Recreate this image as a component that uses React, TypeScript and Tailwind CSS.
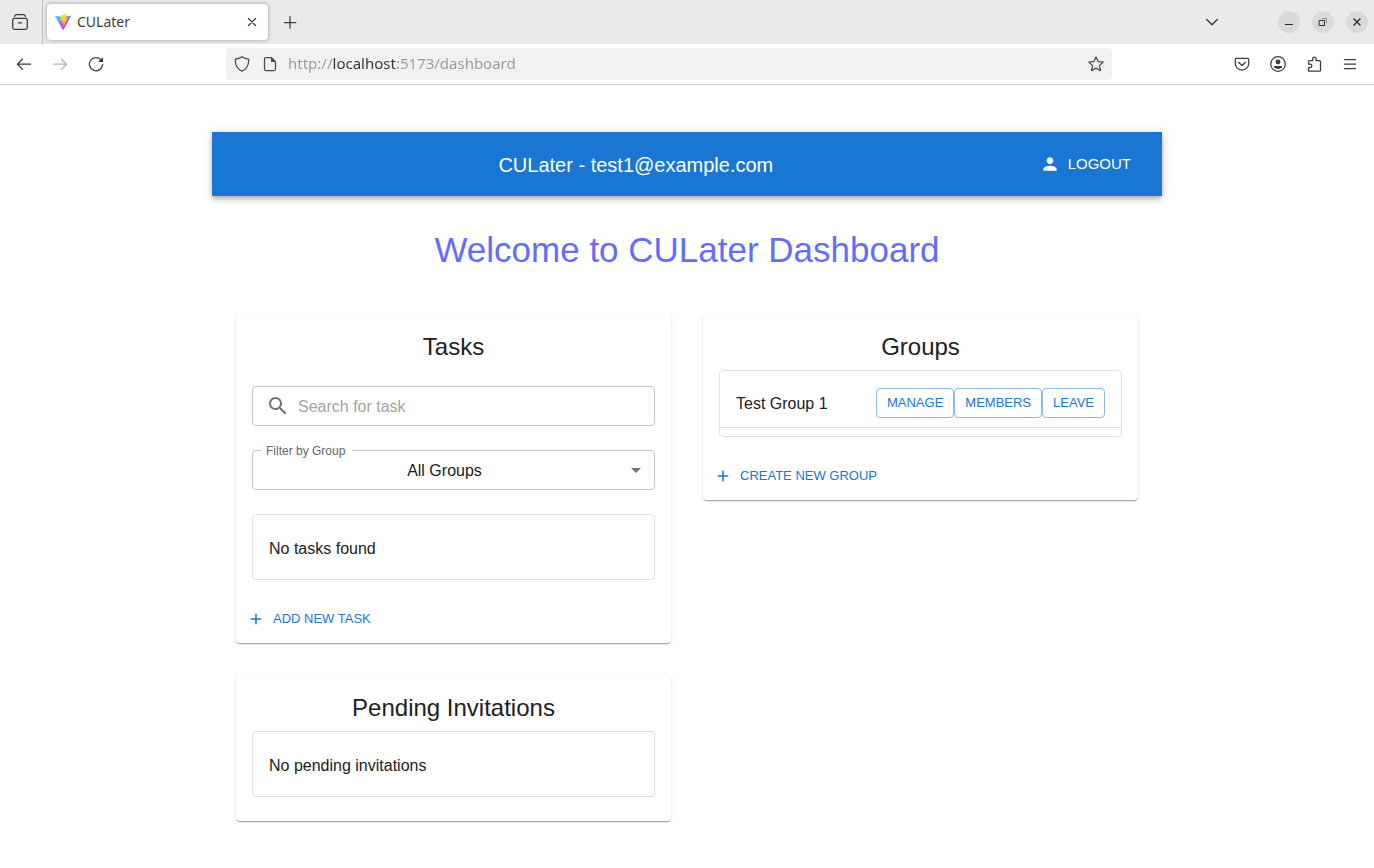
import type { ReactNode } from "react";

function Glyph({ children, className = "size-4" }: { children: ReactNode; className?: string }) {
  return (
    <svg
      viewBox="0 0 16 16"
      fill="none"
      stroke="currentColor"
      strokeWidth="1.25"
      strokeLinecap="round"
      strokeLinejoin="round"
      aria-hidden="true"
      className={className + " shrink-0"}
    >
      {children}
    </svg>
  );
}

function ToolButton({ label, children, disabled = false }: { label: string; children: ReactNode; disabled?: boolean }) {
  return (
    <button
      type="button"
      aria-label={label}
      disabled={disabled}
      className="flex h-8 w-9 shrink-0 items-center justify-center text-[#3c3c3c] disabled:text-[#b3b3b3]"
    >
      {children}
    </button>
  );
}

function WindowButton({ label, children }: { label: string; children: ReactNode }) {
  return (
    <button
      type="button"
      aria-label={label}
      className="flex size-[22px] items-center justify-center rounded-full bg-[#dadada] text-[#2e2e2e]"
    >
      {children}
    </button>
  );
}

function ViteLogo() {
  return (
    <svg viewBox="0 0 256 257" aria-hidden="true" className="size-4 shrink-0">
      <defs>
        <linearGradient id="vite-a" x1="-.828%" x2="57.636%" y1="7.652%" y2="78.411%">
          <stop offset="0%" stopColor="#41D1FF" />
          <stop offset="100%" stopColor="#BD34FE" />
        </linearGradient>
        <linearGradient id="vite-b" x1="43.376%" x2="50.316%" y1="2.242%" y2="89.03%">
          <stop offset="0%" stopColor="#FFEA83" />
          <stop offset="8.333%" stopColor="#FFDD35" />
          <stop offset="100%" stopColor="#FFA800" />
        </linearGradient>
      </defs>
      <path
        fill="url(#vite-a)"
        d="M255.153 37.938L134.897 252.976c-2.483 4.44-8.862 4.466-11.382.048L.875 37.958c-2.746-4.814 1.371-10.646 6.827-9.67l120.385 21.517a6.537 6.537 0 0 0 2.322-.004l117.867-21.483c5.438-.991 9.574 4.796 6.877 9.62Z"
      />
      <path
        fill="url(#vite-b)"
        d="M185.432.063L96.44 17.501a3.268 3.268 0 0 0-2.634 3.014l-5.474 92.456a3.268 3.268 0 0 0 3.997 3.378l24.777-5.718c2.318-.535 4.413 1.507 3.936 3.838l-7.361 36.047c-.495 2.426 1.782 4.5 4.151 3.78l15.304-4.649c2.372-.72 4.652 1.36 4.15 3.788l-11.698 56.621c-.732 3.542 3.979 5.473 5.943 2.437l1.313-2.028l72.516-144.72c1.215-2.423-.88-5.186-3.54-4.672l-25.505 4.922c-2.396.462-4.435-1.77-3.759-4.114l16.646-57.705c.677-2.35-1.37-4.583-3.769-4.113Z"
      />
    </svg>
  );
}

function TabStrip() {
  return (
    <div className="flex h-11 items-center bg-[#eaeaea] pr-[6px]">
      <div className="flex h-full w-[43px] shrink-0 items-center justify-center border-r border-[#bdbdbd] pr-[2px]">
        <button type="button" aria-label="View recent browsing" className="text-[#3c3c3c]">
          <Glyph>
            <path d="M2.6 2.4C2.9 1.2 3.600 .7 4.700 .7h6.600c1.100 0 1.800 .5 2.100 1.700" />
            <rect x="0.7" y="4.4" width="14.6" height="10.900" rx="1.800" />
            <path d="M6.500 8.900h3" />
          </Glyph>
        </button>
      </div>
      <div className="ml-1 flex h-9 w-[221px] shrink-0 items-center rounded bg-white px-2 shadow-[0_0_4px_rgba(0,0,0,0.35)]">
        <ViteLogo />
        <span className="ml-[6px] flex-1 font-['Noto_Sans',sans-serif] text-sm text-[#3c3c3c]">CULater</span>
        <button type="button" aria-label="Close tab" className="text-[#3c3c3c]">
          <Glyph>
            <path d="M4.500 4.500l7 7M11.500 4.500l-7 7" />
          </Glyph>
        </button>
      </div>
      <div className="ml-1">
        <ToolButton label="New tab">
          <Glyph>
            <path d="M8 2.500v11.500M2.300 8.500h11.500" />
          </Glyph>
        </ToolButton>
      </div>
      <div className="ml-auto flex items-center">
        <button type="button" aria-label="List all tabs" className="mr-[58px] text-[#3c3c3c]">
          <Glyph>
            <path d="M2.500 5.300L8 10.800l5.500-5.500" />
          </Glyph>
        </button>
        <div className="flex gap-3">
          <WindowButton label="Minimize">
            <Glyph>
              <path d="M4 10.500h8" strokeLinecap="butt" strokeWidth="1" />
            </Glyph>
          </WindowButton>
          <WindowButton label="Restore">
            <Glyph>
              <path d="M4.500 6.500h5v5h-5z" strokeWidth="1" strokeLinejoin="miter" />
              <path d="M7 4.500h4.500v4.500" strokeWidth="1" stroke="#8a8a8a" strokeLinecap="butt" strokeLinejoin="miter" />
            </Glyph>
          </WindowButton>
          <WindowButton label="Close window">
            <Glyph>
              <path d="M4.500 4.500l7 7M11.500 4.500l-7 7" strokeLinecap="butt" strokeWidth="1.400" />
            </Glyph>
          </WindowButton>
        </div>
      </div>
    </div>
  );
}

function NavBar() {
  return (
    <div className="flex h-[41px] items-center border-b border-[#cccccc] bg-white px-[6px]">
      <ToolButton label="Back">
        <Glyph>
          <path d="M14.500 8.200H1.500M6.600 3L1.400 8.200l5.200 5.200" />
        </Glyph>
      </ToolButton>
      <ToolButton label="Forward" disabled>
        <Glyph>
          <path d="M1.500 8.200h13M9.400 3l5.200 5.200-5.200 5.200" />
        </Glyph>
      </ToolButton>
      <ToolButton label="Reload">
        <Glyph>
          <path d="M14.600 8.600A6.600 6.600 0 1 1 12.900 3.700" />
          <path d="M15 1v4.900h-4.900z" fill="currentColor" stroke="none" />
        </Glyph>
      </ToolButton>
      <div className="mx-28 flex h-8 flex-1 items-center rounded bg-[#f1f1f1] px-2 text-[#4a4a4a]">
        <Glyph>
          <path d="M8 .7c2 1.500 4.200 2.200 6.700 2.500.2 5-1.700 9.700-6.700 12.100C3 12.900 1.100 8.200 1.300 3.200 3.800 2.900 6 2.200 8 .7z" />
        </Glyph>
        <div className="ml-3 flex">
          <Glyph>
            <path d="M9.500 1.600H4A1.500 1.500 0 0 0 2.500 3.100v9.900A1.500 1.500 0 0 0 4 14.500h8a1.500 1.500 0 0 0 1.500-1.500V5.600z" />
            <path d="M9 1.200L13.900 6H9z" fill="currentColor" stroke="none" />
          </Glyph>
        </div>
        <input
          type="text"
          aria-label="Address"
          defaultValue="http://localhost:5173/dashboard"
          className="ml-[10px] min-w-0 flex-1 bg-[linear-gradient(to_right,#999_44px,#333_44px,#333_108px,#999_108px)] bg-clip-text pb-[2px] font-['Noto_Sans',sans-serif] text-[15px] text-transparent caret-black outline-none"
        />
        <button type="button" aria-label="Bookmark this page">
          <Glyph>
            <path d="M8 .9l2.100 4.700 5.100.5-3.800 3.500 1.100 5.100L8 12.100l-4.500 2.600 1.100-5.100L.8 6.100l5.100-.5z" />
          </Glyph>
        </button>
      </div>
      <ToolButton label="Save to Pocket">
        <Glyph>
          <path d="M2.600 2.300h10.800a1.300 1.300 0 0 1 1.300 1.300v3.800a6.700 6.700 0 0 1-13.400 0V3.600a1.300 1.300 0 0 1 1.300-1.300z" />
          <path d="M4.600 6.300L8 9.500l3.400-3.200" />
        </Glyph>
      </ToolButton>
      <ToolButton label="Account">
        <Glyph>
          <circle cx="8" cy="8" r="7.300" />
          <circle cx="8" cy="6" r="2.400" fill="currentColor" stroke="none" />
          <path d="M4 10h8v1.300C11 12.500 9.600 13 8 13s-3-.5-4-1.700z" fill="currentColor" stroke="none" />
        </Glyph>
      </ToolButton>
      <ToolButton label="Extensions">
        <Glyph>
          <path d="M2.500 15.200V11.500h1.700a1.600 1.600 0 0 0 0-3.300H2.500V5.500a1 1 0 0 1 1-1h3.200V2.700a1.700 1.700 0 0 1 3.400 0v1.800h3.400a1 1 0 0 1 1 1v8.700a1 1 0 0 1-1 1z" />
        </Glyph>
      </ToolButton>
      <ToolButton label="Application menu">
        <Glyph>
          <path d="M2.500 3.500h11M2.500 8h11M2.500 12.500h11" />
        </Glyph>
      </ToolButton>
    </div>
  );
}

function Card({ title, children, className }: { title: string; children: ReactNode; className: string }) {
  return (
    <section
      className={
        "rounded bg-white px-4 pt-4 shadow-[0_2px_1px_-1px_rgba(0,0,0,0.2),0_1px_1px_0_rgba(0,0,0,0.14),0_1px_3px_0_rgba(0,0,0,0.12)] " +
        className
      }
    >
      <h2 className="h-8 text-center text-2xl leading-[34px]">{title}</h2>
      {children}
    </section>
  );
}

function AddButton({ children }: { children: ReactNode }) {
  return (
    <button type="button" className="-ml-[5px] flex h-8 items-center gap-2 text-[13px] text-[#1976d2] uppercase">
      <svg viewBox="0 0 24 24" fill="currentColor" aria-hidden="true" className="size-[18px]">
        <path d="M19 13h-6v6h-2v-6H5v-2h6V5h2v6h6z" />
      </svg>
      {children}
    </button>
  );
}

function EmptyBox({ children, className }: { children: ReactNode; className: string }) {
  return (
    <ul className={"rounded border border-[#e0e0e0] py-2 " + className}>
      <li className="px-4 pt-[14px] pb-[10px]">{children}</li>
    </ul>
  );
}

const groupActions = ["Manage", "Members", "Leave"];

export default function App() {
  return (
    <div className="min-h-screen bg-white font-['Liberation_Sans',Arial,sans-serif] text-base text-[#212121]">
      <TabStrip />
      <NavBar />
      <div className="mx-auto max-w-[950px] pt-[47px] pb-8">
        <header className="flex h-16 items-center bg-[#1976d2] px-6 text-white shadow-[0_2px_4px_-1px_rgba(0,0,0,0.2),0_4px_5px_0_rgba(0,0,0,0.14),0_1px_10px_0_rgba(0,0,0,0.12)]">
          <div className="flex-1 pt-[2px] text-center text-xl">CULater - test1@example.com</div>
          <button type="button" className="flex items-center gap-2 py-1 pr-[7px] pl-1 text-[15px] uppercase">
            <svg viewBox="0 0 24 24" fill="currentColor" aria-hidden="true" className="size-5">
              <path d="M12 12c2.210 0 4-1.790 4-4s-1.790-4-4-4-4 1.790-4 4 1.790 4 4 4m0 2c-2.670 0-8 1.340-8 4v2h16v-2c0-2.660-5.330-4-8-4" />
            </svg>
            Logout
          </button>
        </header>
        <main className="px-6 pt-8">
          <h1 className="text-center text-[35px] leading-[44px] text-[#646cff]">Welcome to CULater Dashboard</h1>
          <div className="mt-[42px] grid grid-cols-2 items-start gap-8">
            <Card title="Tasks" className="pb-2">
              <div className="mt-6 flex h-10 items-center gap-2 rounded border border-[#c4c4c4] px-[13px]">
                <svg viewBox="0 0 24 24" fill="#757575" aria-hidden="true" className="size-6 shrink-0">
                  <path d="M15.500 14h-.79l-.28-.27C15.410 12.590 16 11.110 16 9.500 16 5.910 13.090 3 9.500 3S3 5.910 3 9.500 5.910 16 9.500 16c1.610 0 3.090-.59 4.230-1.570l.27.28v.79l5 4.990L20.490 19zm-6 0C7.010 14 5 11.990 5 9.500S7.010 5 9.500 5 14 7.010 14 9.500 11.990 14 9.500 14" />
                </svg>
                <input
                  type="text"
                  aria-label="Search for task"
                  placeholder="Search for task"
                  className="min-w-0 flex-1 pt-[2px] outline-none placeholder:text-[#a3a3a3]"
                />
              </div>
              <div className="relative mt-6">
                <label
                  htmlFor="group-filter"
                  className="absolute -top-[7px] left-[9px] bg-white pr-[7px] pl-[5px] text-xs text-[#666666]"
                >
                  Filter by Group
                </label>
                <select
                  id="group-filter"
                  className="h-10 w-full appearance-none rounded border border-[#c4c4c4] bg-transparent pt-[2px] pr-8 pl-[14px] text-center outline-none"
                >
                  <option>All Groups</option>
                </select>
                <svg
                  viewBox="0 0 24 24"
                  fill="#757575"
                  aria-hidden="true"
                  className="pointer-events-none absolute top-2 right-[7px] size-6"
                >
                  <path d="m7 10 5 5 5-5z" />
                </svg>
              </div>
              <EmptyBox className="mt-6 mb-[23px]">No tasks found</EmptyBox>
              <AddButton>Add new task</AddButton>
            </Card>
            <Card title="Groups" className="pb-2">
              <ul className="mt-2 mb-[23px] rounded border border-[#e0e0e0] py-2">
                <li className="flex items-center justify-between border-b border-[#e0e0e0] px-4 py-2">
                  <span className="pt-[2px] leading-[30px]">Test Group 1</span>
                  <div className="flex">
                    {groupActions.map((action) => (
                      <button
                        key={action}
                        type="button"
                        className="h-[30px] rounded border border-[#8cbae8] px-[10px] text-[13px] text-[#1976d2] uppercase"
                      >
                        {action}
                      </button>
                    ))}
                  </div>
                </li>
              </ul>
              <AddButton>Create new group</AddButton>
            </Card>
            <Card title="Pending Invitations" className="pb-6">
              <EmptyBox className="mt-2">No pending invitations</EmptyBox>
            </Card>
          </div>
        </main>
      </div>
    </div>
  );
}
